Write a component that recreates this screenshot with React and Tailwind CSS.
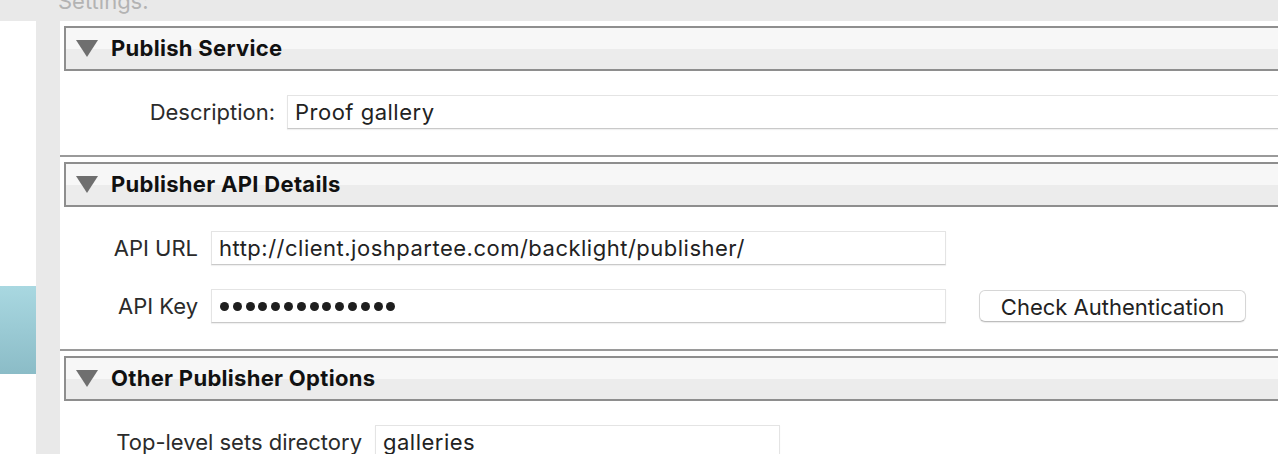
import React from "react";

const font = { fontFamily: "Inter, 'Open Sans', sans-serif" };

// header bar with the disclosure triangle
const SectionHeader = ({ title }) => (
  <div className="h-[45px] border-2 border-[#8e8e8e] bg-[linear-gradient(#f7f7f7_50%,#ececec_50%)] flex items-center">
    <svg width="22" height="17" viewBox="0 0 22 17" className="ml-[10px] shrink-0">
      <polygon points="0,0 22,0 11,17" fill="#6f6f6f" />
    </svg>
    <span className="ml-[13px] text-[22px] font-bold tracking-[0.3px] text-[#111]">{title}</span>
  </div>
);

const Field = ({ children, width }) => (
  <div
    className={`h-[34px] ${width} shrink-0 bg-white border border-[#e4e4e4] border-b-[#c9c9c9] shadow-[0_1px_1px_rgba(0,0,0,0.06)] flex items-center px-[7px] text-[22px] tracking-[0.5px] text-[#222] whitespace-nowrap overflow-hidden`}
  >
    {children}
  </div>
);

const App = () => {
  const dots = Array.from({ length: 14 });
  return (
    <div className="w-[1278px] h-[454px] overflow-hidden bg-[#e9e9e9] flex flex-col" style={font}>
      {/* top strip, title mostly scrolled out */}
      <div className="h-[21px] shrink-0 pl-[58px] overflow-hidden">
        <div className="text-[22px] leading-none text-[#b3b3b3] -mt-[10px]">Settings:</div>
      </div>

      <div className="flex flex-1 min-h-0">
        {/* left list */}
        <div className="w-[36px] shrink-0 bg-white pt-[265px]">
          <div className="h-[88px] bg-[linear-gradient(#a9d8e1,#8bbcc7)]" />
        </div>
        <div className="w-[24px] shrink-0" />

        {/* settings panel */}
        <div className="w-[1240px] shrink-0 bg-white">
          {/* Publish Service */}
          <div className="pt-[5px] pl-[4px]">
            <SectionHeader title="Publish Service" />
          </div>
          <div className="flex items-center mt-[24px]">
            <div className="w-[215px] text-right text-[22px] text-[#2b2b2b]">Description:</div>
            <div className="ml-[12px]">
              <Field width="w-[1000px]">Proof gallery</Field>
            </div>
          </div>

          {/* Publisher API Details */}
          <div className="mt-[26px] border-t-2 border-[#9a9a9a] pt-[5px] pl-[4px]">
            <SectionHeader title="Publisher API Details" />
          </div>
          <div className="flex items-center mt-[24px]">
            <div className="w-[138px] text-right text-[22px] text-[#2b2b2b]">API URL</div>
            <div className="ml-[13px]">
              <Field width="w-[735px]">http://client.joshpartee.com/backlight/publisher/</Field>
            </div>
          </div>
          <div className="flex items-center mt-[24px]">
            <div className="w-[138px] text-right text-[22px] text-[#2b2b2b]">API Key</div>
            <div className="ml-[13px]">
              <Field width="w-[735px]">
                <div className="flex gap-[3.8px] pl-[1px]">
                  {dots.map((_, i) => (
                    <span key={i} className="w-[9px] h-[9px] rounded-full bg-[#1e1e1e]" />
                  ))}
                </div>
              </Field>
            </div>
            <button className="ml-[33px] w-[267px] h-[32px] rounded-[6px] bg-white border border-[#d6d6d6] border-b-[#bdbdbd] shadow-[0_1px_1px_rgba(0,0,0,0.08)] text-[22px] text-[#222]">
              Check Authentication
            </button>
          </div>

          {/* Other Publisher Options */}
          <div className="mt-[26px] border-t-2 border-[#9a9a9a] pt-[5px] pl-[4px]">
            <SectionHeader title="Other Publisher Options" />
          </div>
          <div className="flex items-center mt-[24px]">
            <div className="w-[302px] text-right text-[22px] text-[#2b2b2b]">Top-level sets directory</div>
            <div className="ml-[13px]">
              <Field width="w-[405px]">galleries</Field>
            </div>
          </div>
        </div>
      </div>
    </div>
  );
};

export default App;
